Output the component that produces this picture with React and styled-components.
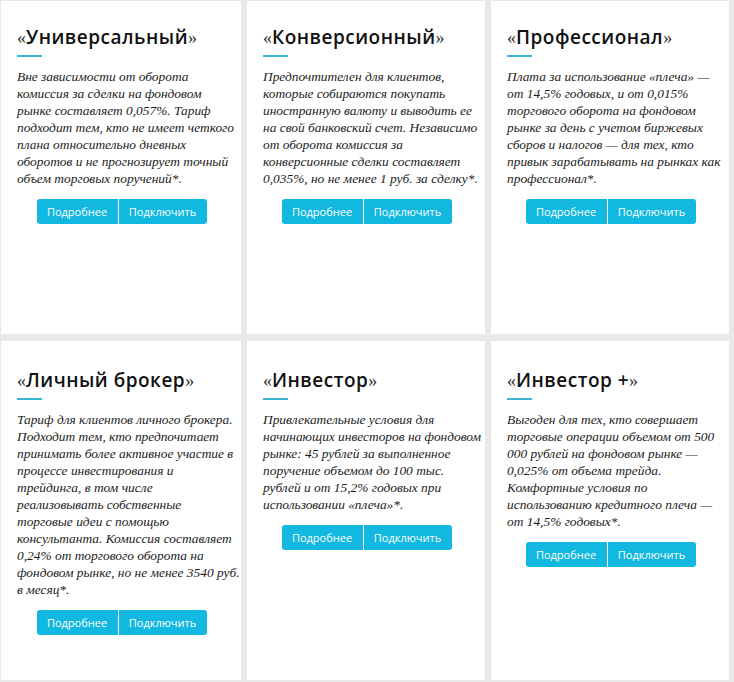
import React from 'react'
import styled, { createGlobalStyle } from "styled-components";

const GlobalStyle = createGlobalStyle`
    html, body {
        margin: 0;
        padding: 0;
        background: #e9e9e9;
    }
`;

const Grid = styled.div`
    display: grid;
    grid-template-columns: 240px 238px 238px;
    grid-template-rows: 333px 339px;
    column-gap: 6px;
    row-gap: 7px;
    padding: 1px 0 2px 1px;
    width: 734px;
    height: 682px;
    box-sizing: border-box;
    background: #e9e9e9;
`;

const Card = styled.div`
    background: #fff;
    padding: ${(p) => p.$top}px 14px 0 16px;
    box-sizing: border-box;
    display: flex;
    flex-direction: column;
`;

const Title = styled.h2`
    margin: 0;
    font-family: "Open Sans", sans-serif;
    font-weight: 600;
    font-size: 19px;
    letter-spacing: 0.5px;
    line-height: 24px;
    color: #111;
    white-space: nowrap;
`;

const Quote = styled.span`
    font-family: "Liberation Serif", serif;
    font-weight: 400;
    font-size: 18px;
    letter-spacing: 0;
    color: #333;
`;

const Accent = styled.div`
    width: 25px;
    height: 2px;
    background: #3ab6d4;
    margin: 5px 0 11px;
`;

const Text = styled.p`
    margin: 0;
    font-family: "Liberation Serif", serif;
    font-style: italic;
    font-size: 13.4px;
    line-height: 17px;
    color: #1c1c1c;
`;

const Line = styled.span`
    display: block;
    white-space: nowrap;
`;

const Buttons = styled.div`
    display: flex;
    align-self: center;
    margin-top: 12px;
    margin-right: 1px;
    border-radius: 3px;
    overflow: hidden;
`;

const Button = styled.a`
    display: flex;
    align-items: center;
    justify-content: center;
    width: ${(p) => p.$w}px;
    height: 25px;
    background: #12b8e0;
    color: #fff;
    font-family: "Open Sans", sans-serif;
    font-size: 11px;
    text-decoration: none;
    & + & {
        border-left: 1px solid #fff;
    }
`;

const tariffs = [
    {
        title: "Универсальный",
        top: 24,
        lines: [
            "Вне зависимости от оборота",
            "комиссия за сделки на фондовом",
            "рынке составляет 0,057%. Тариф",
            "подходит тем, кто не имеет четкого",
            "плана относительно дневных",
            "оборотов и не прогнозирует точный",
            "объем торговых поручений*.",
        ],
    },
    {
        title: "Конверсионный",
        top: 24,
        lines: [
            "Предпочтителен для клиентов,",
            "которые собираются покупать",
            "иностранную валюту и выводить ее",
            "на свой банковский счет. Независимо",
            "от оборота комиссия за",
            "конверсионные сделки составляет",
            "0,035%, но не менее 1 руб. за сделку*.",
        ],
    },
    {
        title: "Профессионал",
        top: 24,
        lines: [
            "Плата за использование «плеча» —",
            "от 14,5% годовых, и от 0,015%",
            "торгового оборота на фондовом",
            "рынке за день с учетом биржевых",
            "сборов и налогов — для тех, кто",
            "привык зарабатывать на рынках как",
            "профессионал*.",
        ],
    },
    {
        title: "Личный брокер",
        top: 27,
        lines: [
            "Тариф для клиентов личного брокера.",
            "Подходит тем, кто предпочитает",
            "принимать более активное участие в",
            "процессе инвестирования и",
            "трейдинга, в том числе",
            "реализовывать собственные",
            "торговые идеи с помощью",
            "консультанта. Комиссия составляет",
            "0,24% от торгового оборота на",
            "фондовом рынке, но не менее 3540 руб.",
            "в месяц*.",
        ],
    },
    {
        title: "Инвестор",
        top: 27,
        lines: [
            "Привлекательные условия для",
            "начинающих инвесторов на фондовом",
            "рынке: 45 рублей за выполненное",
            "поручение объемом до 100 тыс.",
            "рублей и от 15,2% годовых при",
            "использовании «плеча»*.",
        ],
    },
    {
        title: "Инвестор +",
        top: 27,
        lines: [
            "Выгоден для тех, кто совершает",
            "торговые операции объемом от 500",
            "000 рублей на фондовом рынке —",
            "0,025% от объема трейда.",
            "Комфортные условия по",
            "использованию кредитного плеча —",
            "от 14,5% годовых*.",
        ],
    },
];

const App = () => {
    return (
        <>
            <GlobalStyle />
            <Grid>
                {tariffs.map((t, index) => (
                    <Card key={index} $top={t.top}>
                        <Title>
                            <Quote>«</Quote>{t.title}<Quote>»</Quote>
                        </Title>
                        <Accent />
                        <Text>
                            {t.lines.map((l, i) => (
                                <Line key={i}>{l}</Line>
                            ))}
                        </Text>
                        <Buttons>
                            <Button href="#" $w={81}>Подробнее</Button>
                            <Button href="#" $w={88}>Подключить</Button>
                        </Buttons>
                    </Card>
                ))}
            </Grid>
        </>
    )
}

export default App
